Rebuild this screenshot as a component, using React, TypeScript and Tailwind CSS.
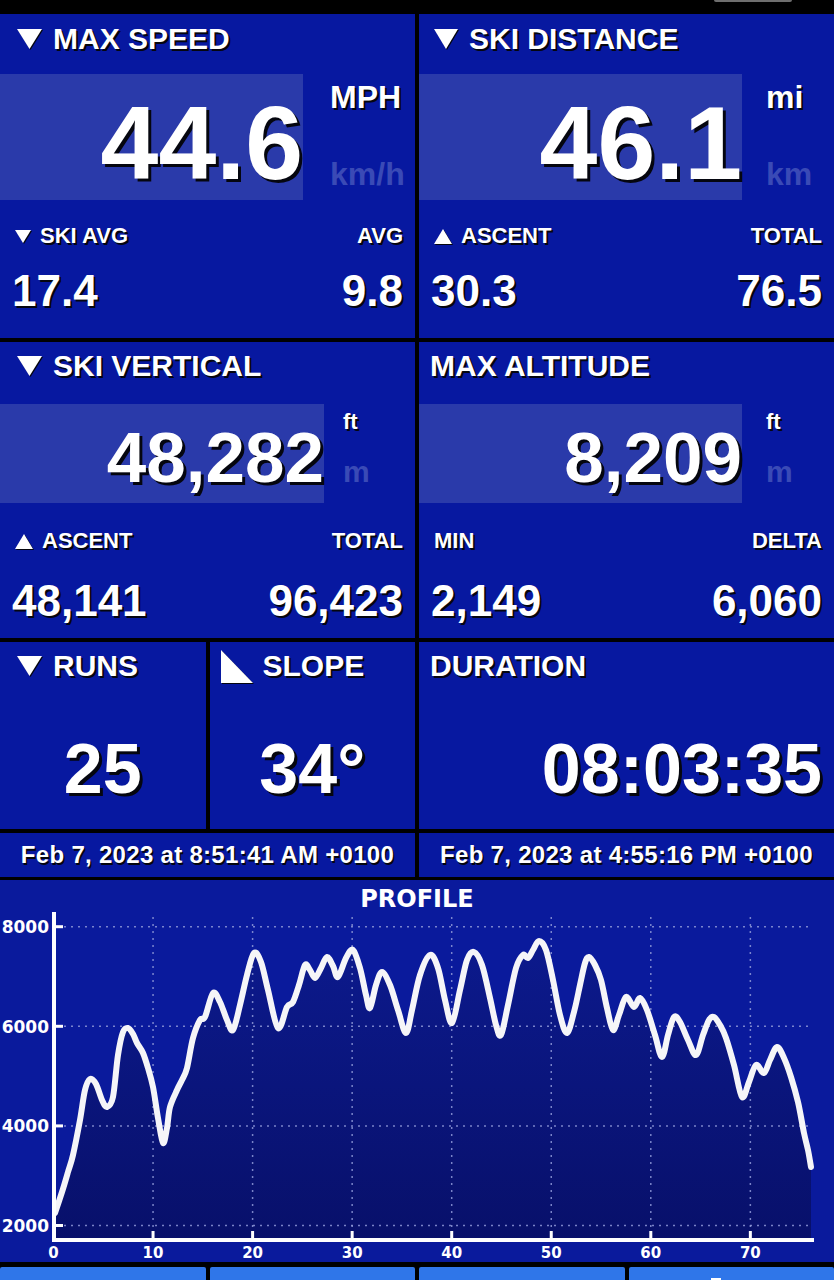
import React from "react"

const sh = "[text-shadow:2px_2px_0_#05060f]"
const shBig = "[text-shadow:3px_3px_0_#05060f]"

const TriDown = ({ w, h }: { w: number; h: number }) => (
	<svg width={w} height={h} viewBox={`0 0 ${w} ${h}`} className="shrink-0 drop-shadow-[1.5px_1.5px_0_#05060f]">
		<polygon points={`0,0 ${w},0 ${w / 2},${h}`} fill="#fff" />
	</svg>
)

const TriUp = ({ w, h }: { w: number; h: number }) => (
	<svg width={w} height={h} viewBox={`0 0 ${w} ${h}`} className="shrink-0 drop-shadow-[1.5px_1.5px_0_#05060f]">
		<polygon points={`${w / 2},0 ${w},${h} 0,${h}`} fill="#fff" />
	</svg>
)

const SlopeIcon = () => (
	<svg width={32} height={33} viewBox="0 0 32 33" className="shrink-0 drop-shadow-[1.5px_1.5px_0_#05060f]">
		<polygon points="0,0 32,33 0,33" fill="#fff" />
	</svg>
)

const Title = ({ icon, children, pad }: { icon?: React.ReactNode; children: React.ReactNode; pad: string }) => (
	<div className={`flex h-[30px] items-center gap-[11px] text-[30px] leading-[30px] font-bold ${sh} ${pad}`}>
		{icon}
		<span>{children}</span>
	</div>
)

const SubRow = ({ icon, left, right, mt }: { icon?: React.ReactNode; left: string; right: string; mt: string }) => (
	<div className={`flex items-center justify-between pl-[15px] pr-[12px] text-[22px] leading-[22px] font-bold ${sh} ${mt}`}>
		<div className="flex items-center gap-[9px]">
			{icon}
			<span>{left}</span>
		</div>
		<span>{right}</span>
	</div>
)

const ValueRow = ({ left, right, mt }: { left: string; right: string; mt: string }) => (
	<div className={`flex justify-between pl-[12px] pr-[12px] text-[44px] leading-[44px] font-bold ${sh} ${mt}`}>
		<span>{left}</span>
		<span>{right}</span>
	</div>
)

// elevation profile, traced in page pixels
const pts: [number, number][] = [
	[55, 1213], [62, 1192], [68, 1172], [73, 1155], [80, 1120], [85, 1090], [90, 1079], [96, 1084],
	[102, 1100], [107, 1107], [113, 1097], [118, 1055], [123, 1032], [128, 1028], [133, 1034], [137, 1043],
	[143, 1053], [148, 1068], [153, 1087], [158, 1118], [163, 1143], [167, 1128], [170, 1107], [177, 1090],
	[182, 1080], [187, 1068], [193, 1038], [200, 1020], [205, 1017], [213, 993], [220, 1002], [227, 1020],
	[233, 1030], [240, 1005], [247, 975], [254, 953], [261, 962], [268, 990], [278, 1028], [287, 1007],
	[293, 1002], [299, 985], [305, 965], [310, 970], [315, 978], [321, 968], [327, 957], [333, 966],
	[338, 977], [346, 958], [353, 950], [360, 968], [366, 995], [370, 1008], [376, 985], [382, 972],
	[390, 985], [398, 1010], [406, 1033], [412, 1010], [420, 975], [430, 955], [438, 968], [445, 1000],
	[452, 1023], [460, 990], [467, 960], [474, 952], [482, 965], [490, 998], [496, 1025], [501, 1035],
	[508, 1005], [516, 968], [523, 955], [528, 958], [533, 950], [539, 941], [546, 950], [553, 980],
	[560, 1015], [567, 1033], [574, 1012], [580, 985], [585, 963], [589, 957], [595, 965], [601, 980],
	[607, 1008], [613, 1030], [619, 1015], [626, 997], [634, 1007], [640, 998], [647, 1010], [655, 1035],
	[662, 1057], [668, 1035], [674, 1017], [680, 1022], [688, 1040], [696, 1055], [703, 1035], [709, 1020],
	[714, 1017], [720, 1025], [726, 1038], [734, 1065], [742, 1097], [749, 1082], [756, 1065], [764, 1073],
	[770, 1060], [777, 1047], [784, 1058], [791, 1077], [798, 1102], [804, 1133], [808, 1150], [811, 1167],
]

const smooth = (p: [number, number][]) => {
	let d = `M${p[0][0]},${p[0][1]}`
	for (let i = 0; i < p.length - 1; i++) {
		const p0 = p[i - 1] || p[i]
		const p1 = p[i]
		const p2 = p[i + 1]
		const p3 = p[i + 2] || p2
		const c1x = p1[0] + (p2[0] - p0[0]) / 6
		const c1y = p1[1] + (p2[1] - p0[1]) / 6
		const c2x = p2[0] - (p3[0] - p1[0]) / 6
		const c2y = p2[1] - (p3[1] - p1[1]) / 6
		d += ` C${c1x.toFixed(1)},${c1y.toFixed(1)} ${c2x.toFixed(1)},${c2y.toFixed(1)} ${p2[0]},${p2[1]}`
	}
	return d
}

const gridY = [926.7, 1026.3, 1125.9, 1225.5]
const yLabels = ["8000", "6000", "4000", "2000"]
const xAt = (k: number) => 53.5 + 99.55 * k

const Profile = () => {
	const line = smooth(pts)
	const area = `${line} L811,1240 L55,1240 Z`
	return (
		<div className="mt-[3px] h-[382px] bg-[#0a1a9c]">
			<div className="h-[32px] pt-[6px] text-center text-[24px] leading-[26px] font-bold text-white font-['DejaVu_Sans',sans-serif]">
				PROFILE
			</div>
			<svg width={834} height={350} viewBox="0 912 834 350" className="block">
				<defs>
					<linearGradient id="fillg" x1="0" y1="930" x2="0" y2="1240" gradientUnits="userSpaceOnUse">
						<stop offset="0" stopColor="#0c1a8e" />
						<stop offset="1" stopColor="#08106a" />
					</linearGradient>
				</defs>
				<path d={area} fill="url(#fillg)" />
				{gridY.map((y) => (
					<line key={y} x1={57} x2={812} y1={y} y2={y} stroke="#8e98d8" strokeWidth={1.5} strokeDasharray="2 5" opacity={0.85} />
				))}
				{[1, 2, 3, 4, 5, 6, 7].map((k) => (
					<line key={k} x1={xAt(k)} x2={xAt(k)} y1={917} y2={1236} stroke="#8e98d8" strokeWidth={1.5} strokeDasharray="2 5" opacity={0.85} />
				))}
				<path d={line} fill="none" stroke="#f5f5f8" strokeWidth={6} strokeLinecap="round" strokeLinejoin="round" />
				<line x1={54} x2={54} y1={911} y2={1242} stroke="#fff" strokeWidth={4} />
				<line x1={52} x2={814} y1={1240} y2={1240} stroke="#fff" strokeWidth={4} />
				{gridY.map((y) => (
					<line key={y} x1={54} x2={63} y1={y} y2={y} stroke="#fff" strokeWidth={3} />
				))}
				{[1, 2, 3, 4, 5, 6, 7].map((k) => (
					<line key={k} x1={xAt(k)} x2={xAt(k)} y1={1231} y2={1240} stroke="#fff" strokeWidth={3} />
				))}
				<g fill="#fff" fontFamily="'DejaVu Sans', sans-serif" fontWeight="bold">
					{gridY.map((y, i) => (
						<text key={y} x={49} y={y + 6.5} fontSize={17} textAnchor="end">
							{yLabels[i]}
						</text>
					))}
					{[0, 1, 2, 3, 4, 5, 6, 7].map((k) => (
						<text key={k} x={xAt(k)} y={1258} fontSize={15} textAnchor="middle">
							{k * 10}
						</text>
					))}
				</g>
			</svg>
		</div>
	)
}

export default function App() {
	return (
		<div className="w-[834px] h-[1280px] overflow-hidden bg-black text-white font-['Liberation_Sans',Arial,sans-serif]">
			<div className="flex h-[14px] justify-end pr-[42px]">
				<div className="h-[2px] w-[78px] rounded-b bg-[#6e6e6e]" />
			</div>

			<div className="grid grid-cols-2 gap-[4px]">
				{/* max speed */}
				<div className="h-[324px] bg-[#0718a0] pt-[10px]">
					<Title pad="pl-[17px]" icon={<TriDown w={25} h={20} />}>MAX SPEED</Title>
					<div className="mt-[20px] flex h-[126px] font-bold">
						<div className={`w-[303px] bg-[#2a3aaa] pt-[17px] text-right text-[104px] leading-[104px] ${shBig}`}>44.6</div>
						<div className="pl-[27px] pt-[7px] text-[32px] leading-[32px]">
							<div className={sh}>MPH</div>
							<div className="mt-[45px] text-[#3a4ab6]">km/h</div>
						</div>
					</div>
					<SubRow mt="mt-[25px]" icon={<TriDown w={16} h={13} />} left="SKI AVG" right="AVG" />
					<ValueRow mt="mt-[22px]" left="17.4" right="9.8" />
				</div>

				{/* ski distance */}
				<div className="h-[324px] bg-[#0718a0] pt-[10px]">
					<Title pad="pl-[15px]" icon={<TriDown w={24} h={20} />}>SKI DISTANCE</Title>
					<div className="mt-[20px] flex h-[126px] font-bold">
						<div className={`w-[323px] bg-[#2a3aaa] pt-[17px] text-right text-[104px] leading-[104px] ${shBig}`}>46.1</div>
						<div className="pl-[24px] pt-[7px] text-[32px] leading-[32px]">
							<div className={sh}>mi</div>
							<div className="mt-[45px] text-[#3a4ab6]">km</div>
						</div>
					</div>
					<SubRow mt="mt-[25px]" icon={<TriUp w={18} h={15} />} left="ASCENT" right="TOTAL" />
					<ValueRow mt="mt-[22px]" left="30.3" right="76.5" />
				</div>

				{/* ski vertical */}
				<div className="h-[296px] bg-[#0718a0] pt-[9px]">
					<Title pad="pl-[17px]" icon={<TriDown w={25} h={20} />}>SKI VERTICAL</Title>
					<div className="mt-[23px] flex h-[99px] font-bold">
						<div className={`w-[324px] bg-[#2a3aaa] pt-[18px] text-right text-[71px] leading-[71px] ${shBig}`}>48,282</div>
						<div className="pl-[19px] pt-[7px]">
							<div className={`text-[22px] leading-[22px] ${sh}`}>ft</div>
							<div className="mt-[24px] text-[30px] leading-[30px] text-[#3a4ab6]">m</div>
						</div>
					</div>
					<SubRow mt="mt-[27px]" icon={<TriUp w={18} h={15} />} left="ASCENT" right="TOTAL" />
					<ValueRow mt="mt-[27px]" left="48,141" right="96,423" />
				</div>

				{/* max altitude */}
				<div className="h-[296px] bg-[#0718a0] pt-[9px]">
					<Title pad="pl-[11px]">MAX ALTITUDE</Title>
					<div className="mt-[23px] flex h-[99px] font-bold">
						<div className={`w-[323px] bg-[#2a3aaa] pt-[18px] text-right text-[71px] leading-[71px] ${shBig}`}>8,209</div>
						<div className="pl-[24px] pt-[7px]">
							<div className={`text-[22px] leading-[22px] ${sh}`}>ft</div>
							<div className="mt-[24px] text-[30px] leading-[30px] text-[#3a4ab6]">m</div>
						</div>
					</div>
					<SubRow mt="mt-[27px]" left="MIN" right="DELTA" />
					<ValueRow mt="mt-[27px]" left="2,149" right="6,060" />
				</div>

				{/* runs + slope */}
				<div className="grid grid-cols-2 gap-[4px]">
					<div className="h-[187px] bg-[#0718a0] pt-[9px]">
						<Title pad="pl-[17px]" icon={<TriDown w={25} h={20} />}>RUNS</Title>
						<div className={`mt-[53px] text-center text-[70px] leading-[70px] font-bold ${shBig}`}>25</div>
					</div>
					<div className="h-[187px] bg-[#0718a0] pt-[9px]">
						<div className={`flex h-[30px] items-center gap-[10px] pl-[11px] text-[30px] leading-[30px] font-bold ${sh}`}>
							<SlopeIcon />
							<span>SLOPE</span>
						</div>
						<div className={`mt-[53px] text-center text-[70px] leading-[70px] font-bold ${shBig}`}>34°</div>
					</div>
				</div>

				{/* duration */}
				<div className="h-[187px] bg-[#0718a0] pt-[9px]">
					<Title pad="pl-[11px]">DURATION</Title>
					<div className={`mt-[53px] pr-[12px] text-right text-[70px] leading-[70px] font-bold ${shBig}`}>08:03:35</div>
				</div>

				<div className="flex h-[44px] items-center justify-center bg-[#0718a0] text-[24px] leading-[24px] font-bold tracking-[0.3px] [text-shadow:1.5px_1.5px_0_#05060f]">
					Feb 7, 2023 at 8:51:41 AM +0100
				</div>
				<div className="flex h-[44px] items-center justify-center bg-[#0718a0] text-[24px] leading-[24px] font-bold tracking-[0.3px] [text-shadow:1.5px_1.5px_0_#05060f]">
					Feb 7, 2023 at 4:55:16 PM +0100
				</div>
			</div>

			<Profile />

			<div className="mt-[5px] grid h-[13px] grid-cols-4 gap-[4px]">
				<div className="rounded-t-[2px] bg-[#2f76e9]" />
				<div className="rounded-t-[2px] bg-[#2f76e9]" />
				<div className="rounded-t-[2px] bg-[#2f76e9]" />
				<div className="rounded-t-[2px] bg-[#2f76e9] pl-[82px] pt-[11px]">
					<div className="h-[2px] w-[10px] bg-white" />
				</div>
			</div>
		</div>
	)
}
